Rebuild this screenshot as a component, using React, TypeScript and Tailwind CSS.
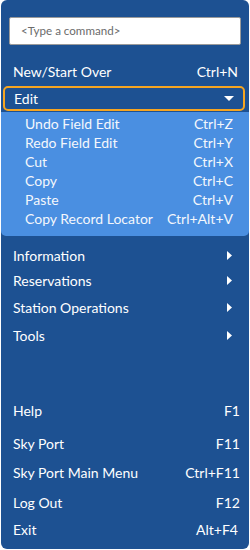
import React from "react";

const RightTri = () => (
  <svg width="5" height="9" viewBox="0 0 5 9" className="block">
    <path d="M0 0 L5 4.5 L0 9 Z" fill="#ffffff" />
  </svg>
);

const DownTri = () => (
  <svg width="10" height="5" viewBox="0 0 10 5" className="block">
    <path d="M0 0 L10 0 L5 5 Z" fill="#ffffff" />
  </svg>
);

export default function App() {
  const sub = [
    ["Undo Field Edit", "Ctrl+Z"],
    ["Redo Field Edit", "Ctrl+Y"],
    ["Cut", "Ctrl+X"],
    ["Copy", "Ctrl+C"],
    ["Paste", "Ctrl+V"],
    ["Copy Record Locator", "Ctrl+Alt+V"],
  ];
  return (
    <div
      className="w-[250px] h-[550px] bg-white"
      style={{ fontFamily: "Lato, 'Open Sans', sans-serif" }}
    >
      <div className="ml-px w-[248px] h-[549px] bg-[#1d5192] rounded-[6px] flex flex-col text-white text-[14px]">
        <div className="pt-[17px] px-[8px]">
          <div className="h-[28px] bg-white border border-[#9a9a9a] rounded-[2px] flex items-center pl-[11px] text-[11.6px] text-[#6b6b6b]">
            &lt;Type a command&gt;
          </div>
        </div>
        <div className="mt-[14px] h-[24px] flex items-center justify-between pl-[12px] pr-[11px]">
          <span>New/Start Over</span>
          <span>Ctrl+N</span>
        </div>
        <div className="mt-[3px] mx-[2px] w-[242px] h-[25px] border-[2.5px] border-[#f6a521] rounded-[5px] flex items-center justify-between pl-[9px] pr-[9px]">
          <span>Edit</span>
          <DownTri />
        </div>
        <div className="mt-[1px] bg-[#4a8fe1] rounded-b-[5px] pt-[2px] pb-[8px] text-[#f4f7fc]">
          {sub.map(([a, b]) => (
            <div
              key={a}
              className="h-[19px] flex items-center justify-between pl-[24px] pr-[16px]"
            >
              <span>{a}</span>
              <span>{b}</span>
            </div>
          ))}
        </div>
        <div className="mt-[6px] flex flex-col">
          {[
            ["Information", "h-[26px]"],
            ["Reservations", "h-[25px]"],
            ["Station Operations", "h-[28px]"],
            ["Tools", "h-[28px]"],
          ].map(([a, h]) => (
            <div
              key={a}
              className={`${h} flex items-center justify-between pl-[12px] pr-[17px]`}
            >
              <span>{a}</span>
              <RightTri />
            </div>
          ))}
        </div>
        <div className="mt-auto mb-[7px] flex flex-col">
          <div className="h-[26px] flex items-center justify-between pl-[12px] pr-[9px]">
            <span>Help</span>
            <span>F1</span>
          </div>
          <div className="mt-[7px] h-[26px] flex items-center justify-between pl-[12px] pr-[9px]">
            <span>Sky Port</span>
            <span>F11</span>
          </div>
          <div className="mt-[3px] h-[26px] flex items-center justify-between pl-[12px] pr-[9px]">
            <span>Sky Port Main Menu</span>
            <span>Ctrl+F11</span>
          </div>
          <div className="mt-[4px] h-[26px] flex items-center justify-between pl-[12px] pr-[9px]">
            <span>Log Out</span>
            <span>F12</span>
          </div>
          <div className="mt-[1px] h-[26px] flex items-center justify-between pl-[12px] pr-[11px]">
            <span>Exit</span>
            <span>Alt+F4</span>
          </div>
        </div>
      </div>
    </div>
  );
}
